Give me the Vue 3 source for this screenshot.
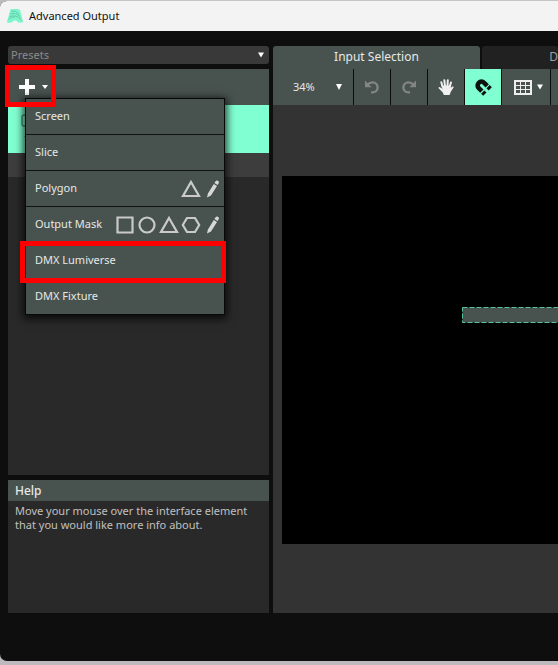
<script setup>
import { ref } from 'vue'

const shapes = {
  square: 'M2.5 2.5h15v15h-15z',
  circle: 'M10 2.5a7.5 7.5 0 1 1 0 15a7.5 7.5 0 1 1 0-15z',
  triangle: 'M10 3L18 17H2z',
  hexagon: 'M6 3h8l4.2 7l-4.2 7H6l-4.2-7z',
}

const items = [
  { label: 'Screen', tools: [] },
  { label: 'Slice', tools: [] },
  { label: 'Polygon', tools: ['triangle', 'pencil'] },
  { label: 'Output Mask', tools: ['square', 'circle', 'triangle', 'hexagon', 'pencil'] },
  { label: 'DMX Lumiverse', tools: [], marked: true },
  { label: 'DMX Fixture', tools: [] },
]

const preset = ref('Presets')
const zoom = ref('34%')
</script>

<template>
  <div class="window">
    <header class="titlebar">
      <svg class="logo" viewBox="0 0 16 14" aria-hidden="true">
        <path d="M3.6 0H11Q12.6 0 13.2 1.6L16 12.4Q16 14 14.4 13.8L11 13.4Q10.4 11.4 8 11.4Q6 11.4 5.2 13.2L1.4 14Q0 14 0 12.4Z" fill="#80f5cc" />
        <path d="M4 2.2Q9 1 12 5M3 5Q9 3 13.4 8M2.4 7.6Q9 5 14.4 11M1.6 10.4Q5 7.4 8 8" fill="none" stroke="#56bd9c" stroke-width=".7" />
      </svg>
      <h1>Advanced Output</h1>
    </header>

    <main class="body">
      <aside class="sidebar">
        <div class="select presets">
          <select v-model="preset" aria-label="Presets"><option>Presets</option></select>
          <svg class="caret" viewBox="0 0 6 6" aria-hidden="true"><path d="M0 0.5h6L3 5.5z" /></svg>
        </div>

        <section class="outputs">
          <div class="addbar">
            <button class="add" type="button" aria-label="Add">
              <svg class="plus" viewBox="0 0 16 16" aria-hidden="true"><path d="M6 0h4v6h6v4h-6v6H6v-6H0V6h6z" /></svg>
              <svg class="caret" viewBox="0 0 6 6" aria-hidden="true"><path d="M0 1h6L3 5z" /></svg>
            </button>
            <div class="mark mark-add"></div>
            <ul class="menu">
              <li v-for="item in items" :key="item.label">
                <button class="entry" type="button">{{ item.label }}</button>
                <span class="tools">
                  <button v-for="tool in item.tools" :key="tool" class="tool" :class="tool" type="button" :aria-label="tool">
                    <svg v-if="tool === 'pencil'" viewBox="0 0 12 20" aria-hidden="true">
                      <path d="M0 18.6L.9 14.4L6.8 5L10 7L4 16.4zM7.4 4L8.6 2.2Q9.6 1 11 1.8Q12.4 2.8 11.7 4.3L10.6 6z" fill="#d6d8d7" />
                    </svg>
                    <svg v-else viewBox="0 0 20 20" aria-hidden="true">
                      <path :d="shapes[tool]" fill="none" stroke="#c9cac9" stroke-width="2.2" />
                    </svg>
                  </button>
                </span>
                <div v-if="item.marked" class="mark mark-item"></div>
              </li>
            </ul>
          </div>
          <div class="row selected">
            <svg viewBox="0 0 20 30" aria-hidden="true">
              <rect x="1" y="1" width="17" height="11" rx="2" fill="none" stroke="#428a72" stroke-width="1.4" />
              <path d="M3 22h6l-3 3z" fill="#428a72" />
            </svg>
          </div>
          <div class="row child"></div>
        </section>

        <section class="help">
          <h2>Help</h2>
          <p>Move your mouse over the interface element that you would like more info about.</p>
        </section>
      </aside>

      <section class="stage">
        <nav class="tabs">
          <button class="tab active" type="button">Input Selection</button>
          <button class="tab next" type="button">D</button>
        </nav>
        <div class="toolbar">
          <div class="select zoom">
            <select v-model="zoom" aria-label="Zoom"><option>34%</option></select>
            <svg class="caret" viewBox="0 0 6 6" aria-hidden="true"><path d="M0 0h6L3 6z" /></svg>
          </div>
          <button class="icon" type="button" aria-label="Undo">
            <svg viewBox="0 0 16 18" aria-hidden="true">
              <path d="M3.5 6.6Q5.6 4.4 8.6 4.4A4.8 4.8 0 0 1 8.6 14.4H7" fill="none" stroke="#828584" stroke-width="2.4" />
              <path d="M1 2.4V9.2H7.6z" fill="#828584" />
            </svg>
          </button>
          <button class="icon" type="button" aria-label="Redo">
            <svg viewBox="0 0 16 18" aria-hidden="true">
              <path d="M12.5 6.6Q10.4 4.4 7.4 4.4A4.8 4.8 0 0 0 7.4 14.4H9" fill="none" stroke="#828584" stroke-width="2.4" />
              <path d="M15 2.4V9.2H8.4z" fill="#828584" />
            </svg>
          </button>
          <button class="icon" type="button" aria-label="Pan">
            <svg viewBox="0 0 16 18" aria-hidden="true">
              <path d="M4.6 9L3.3 4.2M7 8L6.3 2.2M9.5 8L9.8 2.2M11.6 9L13 4.4" fill="none" stroke="#f0f0f0" stroke-width="2" stroke-linecap="round" />
              <path d="M3.8 7.4H12.6L12.8 10L14 8.6Q15.6 8 15.7 9.2L12.8 13.8L11.6 17H5.8L4.8 14.4L.6 10.2Q.4 8.8 2 9.2L4.4 10.8z" fill="#f0f0f0" />
            </svg>
          </button>
          <button class="icon on" type="button" aria-label="Snap">
            <svg viewBox="0 0 18 18" aria-hidden="true">
              <g transform="rotate(-45 9 9)" fill="none" stroke="#0b120f" stroke-width="4.6">
                <path d="M5.2 11.2V6.8A3.8 3.8 0 0 1 12.8 6.8V11.2" />
                <path d="M5.2 12.4V15.4M12.8 12.4V15.4" />
              </g>
            </svg>
          </button>
          <button class="icon grid" type="button" aria-label="Grid">
            <svg class="cells" viewBox="0 0 18 15" aria-hidden="true">
              <path fill="#eeeeee" fill-rule="evenodd" d="M0 0H18V15H0zM2 2V5H6V2zM7 2V5H11V2zM12 2V5H16V2zM2 6V9H6V6zM7 6V9H11V6zM12 6V9H16V6zM2 10V13H6V10zM7 10V13H11V10zM12 10V13H16V10z" />
            </svg>
            <svg class="caret" viewBox="0 0 6 6" aria-hidden="true"><path d="M0 0.5h6L3 5.5z" /></svg>
          </button>
          <div class="rest"></div>
        </div>
        <div class="viewport">
          <div class="canvas">
            <svg class="slice" aria-hidden="true">
              <rect x="0.5" y="0.5" width="190" height="15" />
            </svg>
          </div>
        </div>
      </section>
    </main>
  </div>
</template>

<style>
body {
  margin: 0;
  background: #bdb9bf;
}
</style>

<style scoped>
* {
  box-sizing: border-box;
}
.window {
  display: flex;
  flex-direction: column;
  height: calc(100vh - 4px);
  margin-bottom: 4px;
  overflow: hidden;
  border-top: 1px solid #c4c4c4;
  border-radius: 7px 0 0 7px;
  background: #0e0e0e;
  color: #e6e8e7;
  font-family: "Noto Sans", "Open Sans", sans-serif;
  font-size: 11px;
}
button,
select {
  margin: 0;
  padding: 0;
  border: 0;
  background: none;
  color: inherit;
  font: inherit;
}
svg {
  display: block;
}
.titlebar {
  display: flex;
  flex: none;
  align-items: center;
  gap: 6px;
  height: 30px;
  padding-left: 7px;
  background: #f3f3f3;
}
.logo {
  width: 16px;
  height: 14px;
}
h1 {
  margin: 0;
  padding-bottom: 2px;
  color: #111111;
  font-size: 11px;
  font-weight: 400;
}
.body {
  display: flex;
  flex: 1;
  gap: 4px;
  min-height: 0;
  padding: 15px 0 48px 8px;
}
.sidebar {
  display: flex;
  flex: none;
  flex-direction: column;
  width: 261px;
}
.select {
  display: flex;
  position: relative;
  align-items: center;
}
.select select {
  width: 100%;
  height: 100%;
  padding-bottom: 2px;
  appearance: none;
}
.caret {
  width: 6px;
  height: 6px;
  fill: #ffffff;
}
.select .caret {
  position: absolute;
  pointer-events: none;
}
.presets {
  height: 18px;
  margin-bottom: 5px;
  border-radius: 3px;
  background: #393939;
  color: #8b8b8b;
}
.presets select {
  padding-left: 3px;
}
.presets .caret {
  right: 5px;
}
.outputs {
  display: flex;
  flex: 1;
  flex-direction: column;
  margin-bottom: 5px;
  background: #292929;
}
.addbar {
  position: relative;
  height: 36px;
  background: #48534f;
}
.add {
  display: flex;
  align-items: center;
  gap: 7px;
  height: 36px;
  padding-left: 11px;
}
.plus {
  width: 16px;
  height: 16px;
  fill: #ffffff;
}
.mark {
  position: absolute;
  z-index: 3;
  border: 5px solid #ff0000;
  pointer-events: none;
}
.mark-add {
  top: -4px;
  left: -3px;
  width: 51px;
  height: 42px;
}
.mark-item {
  inset: -2px -2px -5px -6px;
}
.menu {
  position: absolute;
  z-index: 2;
  top: 29px;
  left: 17px;
  width: 200px;
  margin: 0;
  padding: 0;
  border: 1px solid #080808;
  background: #48534f;
  box-shadow: 0 2px 8px 2px rgba(0, 0, 0, 0.75);
  list-style: none;
}
.menu li {
  display: flex;
  position: relative;
  align-items: center;
  height: 36px;
  padding: 0 5px 0 9px;
  border-bottom: 1px solid #101312;
}
.menu li:last-child {
  height: 35px;
  border-bottom: 0;
}
.entry {
  flex: 1;
  height: 100%;
  padding-bottom: 2px;
  text-align: left;
}
.tools {
  display: flex;
  gap: 2px;
}
.tool {
  width: 20px;
  height: 20px;
}
.tool.pencil {
  width: 12px;
  margin-left: 4px;
}
.row.selected {
  height: 48px;
  padding: 9px 13px;
  background: #80ffd2;
}
.row.selected svg {
  width: 20px;
  height: 30px;
}
.row.child {
  height: 24px;
  background: #3d3d3d;
}
.help {
  height: 133px;
  background: #292929;
}
h2 {
  margin: 0;
  padding-left: 7px;
  background: #48534f;
  font-size: 12px;
  font-weight: 500;
  line-height: 21px;
}
.help p {
  margin: 0;
  padding: 3px 7px;
  color: #c0c0c0;
  line-height: 14px;
}
.stage {
  display: flex;
  flex: 1;
  flex-direction: column;
  min-width: 0;
}
.tabs {
  display: flex;
  gap: 2px;
  height: 23px;
  font-size: 12px;
}
.tab {
  padding-bottom: 2px;
  border-radius: 3px 3px 0 0;
}
.tab.active {
  width: 207px;
  background: #48534f;
}
.tab.next {
  flex: 1;
  background: #212121;
  color: #a0a0a0;
  text-align: right;
}
.toolbar {
  display: flex;
  gap: 1px;
  height: 36px;
  background: #0b0d0c;
}
.toolbar > * {
  background: #48534f;
}
.zoom {
  width: 80px;
}
.zoom select {
  padding-left: 20px;
}
.zoom .caret {
  right: 11px;
}
.icon {
  display: flex;
  align-items: center;
  justify-content: center;
  width: 36px;
}
.icon svg {
  width: 16px;
  height: 18px;
}
.icon.on {
  background: #80ffd2;
}
.icon.on svg {
  width: 18px;
}
.icon.grid {
  gap: 5px;
  width: 48px;
  padding-left: 4px;
}
.icon .cells {
  width: 18px;
  height: 15px;
}
.icon .caret {
  width: 6px;
  height: 6px;
}
.rest {
  flex: 1;
}
.viewport {
  flex: 1;
  overflow: hidden;
  padding: 71px 0 0 9px;
  background: #333333;
}
.canvas {
  position: relative;
  width: 653px;
  height: 368px;
  background: #000000;
}
.slice {
  position: absolute;
  top: 131px;
  left: 180px;
  width: 191px;
  height: 16px;
}
.slice rect {
  fill: #48534f;
  stroke: #55c39c;
  stroke-dasharray: 5 2;
}
</style>
